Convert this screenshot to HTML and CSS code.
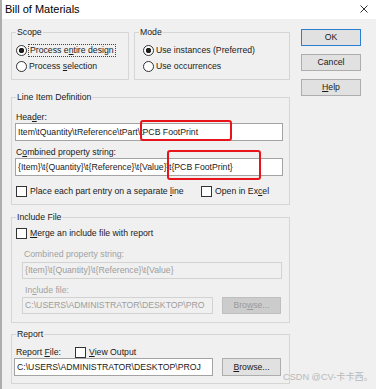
FILE: index.html
```html
<!DOCTYPE html>
<html lang="en">
<head>
  <meta charset="UTF-8">
  <title>Bill of Materials</title>
  <link rel="stylesheet" href="styles.css">
</head>
<body>

<div class="window">
  <div class="titlebar">
    <span class="title">Bill of Materials</span>
    <svg class="close" viewBox="0 0 8 8"><path d="M0.5 0.5 L7.5 7.5 M7.5 0.5 L0.5 7.5" stroke="#333" stroke-width="1" fill="none"/></svg>
  </div>

  <div class="content">
    <div class="main">
      <div class="top-row">
        <fieldset class="group scope">
          <legend>Scope</legend>
          <div class="opt"><span class="radio on"></span><span class="focus">Process e<u>n</u>tire design</span></div>
          <div class="opt"><span class="radio"></span><span>Process <u>s</u>election</span></div>
        </fieldset>
        <fieldset class="group mode">
          <legend>Mode</legend>
          <div class="opt"><span class="radio on"></span><span>Use instances (Preferred)</span></div>
          <div class="opt"><span class="radio"></span><span>Use occurrences</span></div>
        </fieldset>
      </div>

      <fieldset class="group line-item">
        <legend>Line Item Definition</legend>
        <div class="lbl">Hea<u>d</u>er:</div>
        <div class="field wide gap">Item\tQuantity\tReference\tPart\tPCB FootPrint</div>
        <div class="lbl">C<u>o</u>mbined property string:</div>
        <div class="field wide">{Item}\t{Quantity}\t{Reference}\t{Value}\t{PCB FootPrint}</div>
        <div class="checks">
          <div class="opt first"><span class="check"></span><span>Place each part entry on a separate <u>l</u>ine</span></div>
          <div class="opt"><span class="check"></span><span>Open in Ex<u>c</u>el</span></div>
        </div>
      </fieldset>

      <fieldset class="group include">
        <legend>Include File</legend>
        <div class="opt row14"><span class="check"></span><span><u>M</u>erge an include file with report</span></div>
        <div class="lbl dis-lbl">Combined property string:</div>
        <div class="field dis combo">{Item}\t{Quantity}\t{Reference}\t{Value}</div>
        <div class="lbl dis-lbl inc">In<u>c</u>lude file:</div>
        <div class="path-row dis-row">
          <div class="field dis path">C:\USERS\ADMINISTRATOR\DESKTOP\PRO</div>
          <div class="btn browse disabled"><span>Bro<u>w</u>se...</span></div>
        </div>
      </fieldset>

      <fieldset class="group report">
        <legend>Report</legend>
        <div class="report-row">
          <span class="report-lbl">Report <u>F</u>ile:</span>
          <div class="opt"><span class="check"></span><span><u>V</u>iew Output</span></div>
        </div>
        <div class="path-row">
          <div class="field path report-path">C:\USERS\ADMINISTRATOR\DESKTOP\PROJ</div>
          <div class="btn browse"><span><u>B</u>rowse...</span></div>
        </div>
      </fieldset>
    </div>

    <div class="buttons">
      <div class="btn default">OK</div>
      <div class="btn">Cancel</div>
      <div class="btn"><span><u>H</u>elp</span></div>
    </div>
  </div>

  <div class="mark mark-header"></div>
  <div class="mark mark-combined"></div>
  <div class="watermark">CSDN @CV-卡卡西。</div>
</div>

</body>
</html>
```

FILE: styles.css
```css
* { box-sizing: border-box; }
body {
  margin: 0;
  background: #f0f0f0;
  font-family: "Liberation Sans", Arial, sans-serif;
  font-size: 8.7px;
  line-height: 11px;
  color: #1a1a1a;
}
u { text-decoration-thickness: 1px; text-underline-offset: 1px; }

.window {
  position: relative;
  width: 376px;
  height: 389px;
  background: #f0f0f0;
  border-left: 2px solid #adadad;
  overflow: hidden;
}
.titlebar {
  height: 19px;
  background: #fff;
  display: flex;
  align-items: center;
  justify-content: space-between;
  padding: 0 8px 2px 3px;
}
.title { font-size: 11px; line-height: 16px; color: #000; }
.close { width: 8px; height: 8px; }

.content { display: flex; gap: 11px; padding: 7.5px 0 0 9px; }
.main { width: 279px; display: flex; flex-direction: column; }

.group {
  margin: 0;
  min-width: 0;
  border: 1px solid #d6d6d6;
  padding: 4.5px 4px;
}
.group legend { padding: 0 1px; line-height: 11px; }

.top-row { display: flex; gap: 5px; }
.scope { width: 118px; }
.mode { flex: 1; }
.mode .opt { margin-left: 4px; }

.opt { display: flex; align-items: center; height: 16px; white-space: nowrap; }
.radio {
  flex: none;
  width: 11px;
  height: 11px;
  margin-right: 2px;
  border: 1px solid #333;
  border-radius: 50%;
  background: #fff;
}
.radio.on { background: radial-gradient(circle, #1e1e1e 0 2.4px, #fff 3px); }
.focus { outline: 1px dotted #444; padding: 0 1px; }
.check {
  flex: none;
  width: 11px;
  height: 11px;
  margin-right: 3px;
  border: 1px solid #333;
  background: #fff;
}

.lbl { height: 12px; line-height: 12px; white-space: nowrap; }
.field {
  height: 18px;
  line-height: 16px;
  padding: 0 2px;
  background: #fff;
  border: 1px solid #a3a3a3;
  white-space: nowrap;
  overflow: hidden;
}
.wide { width: 268px; margin-left: -1px; }
.gap { margin-bottom: 5px; }

.line-item { margin-top: 12px; padding: 8px 4px 6px; }
.checks { display: flex; align-items: center; height: 14px; margin-top: 8.5px; }
.checks .first { width: 185px; }

.include { margin-top: 7px; padding: 3.5px 4px 8px; }
.row14 { height: 14px; }
.dis-lbl { color: #a2a2a2; margin: 7px 0 2px 8px; }
.dis-lbl.inc { margin: 5px 0 1px 9px; }
.field.dis { background: #f0f0f0; border-color: #d2d2d2; color: #9d9d9d; height: 17px; line-height: 15px; }
.combo { width: 260px; margin-left: 6px; }

.path-row { display: flex; gap: 9px; }
.dis-row { margin-left: 6px; }
.path { width: 191px; }
.report-path { width: 199px; margin-left: -2px; }

.report { margin-top: 6px; padding: 6.5px 4px 6.5px; }
.report-row { display: flex; align-items: center; height: 12px; }
.report-lbl { width: 59px; }
.report-row .opt { height: 12px; }

.btn {
  display: flex;
  align-items: center;
  justify-content: center;
  width: 60px;
  height: 17px;
  background: #e1e1e1;
  border: 1px solid #adadad;
  color: #1a1a1a;
}
.btn.default { border-color: #2a7fd4; }
.btn.browse { width: 59px; height: 18px; }
.btn.disabled { background: #cccccc; border-color: #bfbfbf; color: #9a9a9a; height: 17px; }

.buttons { display: flex; flex-direction: column; gap: 8px; margin-top: 2.5px; }

.mark {
  position: absolute;
  border: 2px solid #e8141b;
  border-radius: 3px;
}
.mark-header { left: 138px; top: 120px; width: 92px; height: 21px; }
.mark-combined { left: 165px; top: 150px; width: 94px; height: 30px; }

.watermark {
  position: absolute;
  right: 3px;
  bottom: 6px;
  font-family: "Liberation Sans", "Noto Sans CJK SC", sans-serif;
  font-size: 9.2px;
  color: #b9b9b9;
  white-space: nowrap;
}
```
